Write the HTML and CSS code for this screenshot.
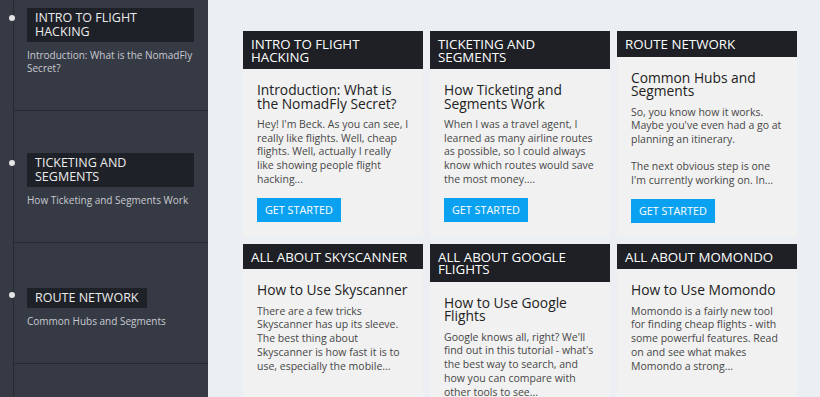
FILE: index.html
```html
<!DOCTYPE html>
<html lang="en">
<head>
    <meta charset="UTF-8">
    <meta name="viewport" content="width=device-width, initial-scale=1.0">
    <title>NomadFly Courses</title>
    <link rel="stylesheet" href="styles.css">
</head>
<body>
    <aside class="sidebar">
        <ul class="lessons">
            <li class="lesson">
                <div class="lesson-title">Intro to Flight Hacking</div>
                <p class="lesson-sub">Introduction: What is the NomadFly Secret?</p>
            </li>
            <li class="lesson">
                <div class="lesson-title">Ticketing and Segments</div>
                <p class="lesson-sub">How Ticketing and Segments Work</p>
            </li>
            <li class="lesson">
                <div class="lesson-title">Route Network</div>
                <p class="lesson-sub">Common Hubs and Segments</p>
            </li>
        </ul>
    </aside>

    <main class="main">
        <div class="cards">
            <div class="card">
                <h2 class="card-head">Intro to Flight Hacking</h2>
                <div class="card-body">
                    <h3 class="card-title">Introduction: What is the NomadFly Secret?</h3>
                    <p class="card-text">Hey! I'm Beck. As you can see, I really like flights. Well, cheap flights. Well, actually I really like showing people flight hacking...</p>
                    <a class="btn" href="#">Get Started</a>
                </div>
            </div>
            <div class="card">
                <h2 class="card-head">Ticketing and Segments</h2>
                <div class="card-body">
                    <h3 class="card-title">How Ticketing and Segments Work</h3>
                    <p class="card-text">When I was a travel agent, I learned as many airline routes as possible, so I could always know which routes would save the most money....</p>
                    <a class="btn" href="#">Get Started</a>
                </div>
            </div>
            <div class="card">
                <h2 class="card-head">Route Network</h2>
                <div class="card-body">
                    <h3 class="card-title">Common Hubs and Segments</h3>
                    <p class="card-text">So, you know how it works. Maybe you've even had a go at planning an itinerary.</p>
                    <p class="card-text">The next obvious step is one I'm currently working on. In...</p>
                    <a class="btn" href="#">Get Started</a>
                </div>
            </div>
            <div class="card">
                <h2 class="card-head">All About Skyscanner</h2>
                <div class="card-body">
                    <h3 class="card-title">How to Use Skyscanner</h3>
                    <p class="card-text">There are a few tricks Skyscanner has up its sleeve. The best thing about Skyscanner is how fast it is to use, especially the mobile...</p>
                </div>
            </div>
            <div class="card">
                <h2 class="card-head">All About Google Flights</h2>
                <div class="card-body">
                    <h3 class="card-title">How to Use Google Flights</h3>
                    <p class="card-text">Google knows all, right? We'll find out in this tutorial - what's the best way to search, and how you can compare with other tools to see...</p>
                </div>
            </div>
            <div class="card">
                <h2 class="card-head">All About Momondo</h2>
                <div class="card-body">
                    <h3 class="card-title">How to Use Momondo</h3>
                    <p class="card-text">Momondo is a fairly new tool for finding cheap flights - with some powerful features. Read on and see what makes Momondo a strong...</p>
                </div>
            </div>
        </div>
    </main>
</body>
</html>
```

FILE: styles.css
```css
/* 全局样式 */
* {
    margin: 0;
    padding: 0;
    box-sizing: border-box;
}

body {
    font-family: 'Open Sans', 'Liberation Sans', sans-serif;
    display: flex;
    height: 397px;
    overflow: hidden;
    background-color: #ebeef2;
}

/* 侧边栏 */
.sidebar {
    width: 208px;
    flex-shrink: 0;
    background: linear-gradient(to right, transparent 13px, #272a31 13px, #272a31 14px, transparent 14px), #363a45;
}

.lessons {
    list-style: none;
    margin-top: -34px;
}

.lesson {
    position: relative;
    margin-left: 14px;
    padding: 42px 14px 35px 13px;
    border-bottom: 1px solid #272a31;
}

.lesson::before {
    content: '';
    position: absolute;
    left: -5px;
    top: 49px;
    width: 6px;
    height: 6px;
    border-radius: 50%;
    background-color: #e4e4e4;
}

.lesson-title {
    display: inline-block;
    max-width: 167px;
    padding: 3px 8px;
    background-color: #1f2128;
    color: #ececec;
    font-size: 12.5px;
    line-height: 14px;
    text-transform: uppercase;
}

.lesson-sub {
    margin-top: 7px;
    font-size: 10px;
    line-height: 13px;
    color: #c8cad0;
}

/* 卡片区域 */
.main {
    flex: 1;
    padding: 31px 23px 0 35px;
}

.cards {
    display: grid;
    grid-template-columns: repeat(3, 180px);
    gap: 7px;
}

.card {
    background-color: #f1f1f1;
}

.card-head {
    padding: 7px 8px 6px;
    background-color: #1e2025;
    color: #fff;
    font-size: 13.3px;
    font-weight: normal;
    line-height: 12.5px;
    text-transform: uppercase;
}

.card-body {
    padding: 14px;
}

.card-title {
    font-size: 13.8px;
    font-weight: normal;
    line-height: 13.5px;
    color: #222;
    margin-bottom: 8px;
}

.card-text {
    font-size: 10.5px;
    line-height: 13.7px;
    color: #474747;
}

.card-text + .card-text {
    margin-top: 13.7px;
}

.btn {
    display: inline-block;
    margin-top: 11px;
    padding: 0 8px;
    height: 24px;
    line-height: 24px;
    background-color: #0aa2f0;
    color: #fff;
    font-size: 10.8px;
    text-decoration: none;
    text-transform: uppercase;
}
```
